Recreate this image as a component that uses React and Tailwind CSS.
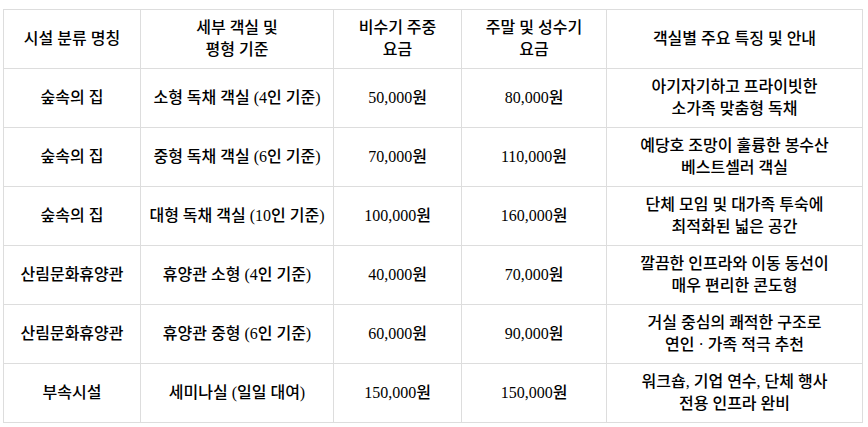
import React from "react";

const rows = [
  ["숲속의 집", "소형 독채 객실 (4인 기준)", "50,000원", "80,000원", ["아기자기하고 프라이빗한", "소가족 맞춤형 독채"]],
  ["숲속의 집", "중형 독채 객실 (6인 기준)", "70,000원", "110,000원", ["예당호 조망이 훌륭한 봉수산", "베스트셀러 객실"]],
  ["숲속의 집", "대형 독채 객실 (10인 기준)", "100,000원", "160,000원", ["단체 모임 및 대가족 투숙에", "최적화된 넓은 공간"]],
  ["산림문화휴양관", "휴양관 소형 (4인 기준)", "40,000원", "70,000원", ["깔끔한 인프라와 이동 동선이", "매우 편리한 콘도형"]],
  ["산림문화휴양관", "휴양관 중형 (6인 기준)", "60,000원", "90,000원", ["거실 중심의 쾌적한 구조로", "연인 · 가족 적극 추천"]],
  ["부속시설", "세미나실 (일일 대여)", "150,000원", "150,000원", ["워크숍, 기업 연수, 단체 행사", "전용 인프라 완비"]],
];

const header = [
  ["시설 분류 명칭"],
  ["세부 객실 및", "평형 기준"],
  ["비수기 주중", "요금"],
  ["주말 및 성수기", "요금"],
  ["객실별 주요 특징 및 안내"],
];

const Cell = ({ lines }) => (
  <div className="h-[59px] border-r border-b border-[#dddddd] flex flex-col items-center justify-center text-center">
    {lines.map((l, i) => (
      <span key={i} className="block whitespace-nowrap">
        {l}
      </span>
    ))}
  </div>
);

const App = () => {
  return (
    <div className="w-[868px] h-[427px] bg-white pt-[9px] pl-[3px]">
      <div
        className="grid grid-cols-[137px_193px_128px_145px_256px] w-[860px] border-t border-l border-[#dddddd] text-[16px] leading-[22px] font-medium text-black"
        style={{ fontFamily: '"Liberation Serif", "Noto Sans CJK KR", serif' }}
      >
        {header.map((h, i) => (
          <Cell key={"h" + i} lines={h} />
        ))}
        {rows.map((r, ri) =>
          r.map((c, ci) => (
            <Cell key={ri + "-" + ci} lines={Array.isArray(c) ? c : [c]} />
          ))
        )}
      </div>
    </div>
  );
};

export default App;
